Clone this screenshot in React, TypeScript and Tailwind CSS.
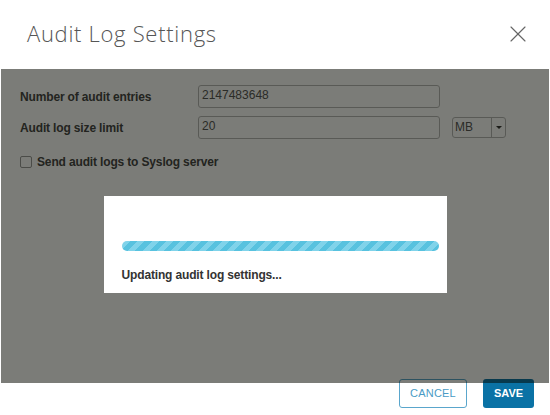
import { X } from "lucide-react";

function Field({ label, value }: { label: string; value: string }) {
  return (
    <div className="flex items-center h-[23px]">
      <label className="w-[178px] text-[12px] font-bold text-[#444] tracking-[-0.15px]">{label}</label>
      <div className="w-[242px] h-[23px] rounded-[3px] border border-[#b8b8b8] bg-white px-[3px] text-[12px] leading-[19px] text-[#555]">
        {value}
      </div>
    </div>
  );
}

export default function App() {
  return (
    <div className="w-[550px] h-[415px] bg-white flex flex-col font-['Liberation_Sans',Arial,sans-serif] overflow-hidden">
      <div className="h-[69px] shrink-0 flex items-center justify-between pl-[27px] pr-[18px] pb-[2px]">
        <h2 className="font-['Open_Sans',sans-serif] font-light text-[22px] text-[#565656] tracking-[0.7px]">
          Audit Log Settings
        </h2>
        <X className="w-[28px] h-[28px] text-[#666]" strokeWidth={1} />
      </div>

      <div className="relative h-[310px] shrink-0">
        <div className="flex flex-col gap-2 pt-4 px-5">
          <Field label="Number of audit entries" value="2147483648" />
          <div className="flex items-center gap-3">
            <Field label="Audit log size limit" value="20" />
            <div className="flex h-[21px] w-[54px] rounded-[3px] border border-[#b8b8b8] text-[12px] text-[#555]">
              <span className="flex-1 px-[2px] leading-[19px]">MB</span>
              <span className="w-[14px] border-l border-[#b8b8b8] flex items-center justify-center">
                <span className="border-x-[3px] border-x-transparent border-t-[3px] border-t-[#333]" />
              </span>
            </div>
          </div>
          <label className="flex items-center gap-[5px] mt-[6px] text-[12px] font-bold text-[#444] tracking-[-0.15px]">
            <span className="w-[12px] h-[12px] rounded-[2px] border border-[#999] bg-white" />
            Send audit logs to Syslog server
          </label>
        </div>

        <div className="absolute top-0 left-px right-px -bottom-1 z-10 bg-[rgba(6,8,0,0.53)] flex justify-center pt-[127px]">
          <div className="w-[343px] h-[97px] bg-white pl-[18px] pr-[8px] pt-[45px]">
            <div className="h-[10px] rounded-full bg-[repeating-linear-gradient(-45deg,#58c2df_0px,#58c2df_5px,#80d3ea_5px,#80d3ea_10px)]" />
            <p className="mt-[15px] text-[12px] font-bold text-[#333] tracking-[-0.15px]">Updating audit log settings...</p>
          </div>
        </div>
      </div>

      <div className="flex justify-end gap-4 pr-4">
        <button className="w-[68px] h-[29px] rounded-[3px] border border-[#5aa6cc] bg-white text-[11px] text-[#4a9bc5] tracking-[0.2px]">
          CANCEL
        </button>
        <button className="w-[51px] h-[29px] rounded-[3px] bg-[#0a72a5] text-[11px] font-bold text-white">
          SAVE
        </button>
      </div>
    </div>
  );
}
